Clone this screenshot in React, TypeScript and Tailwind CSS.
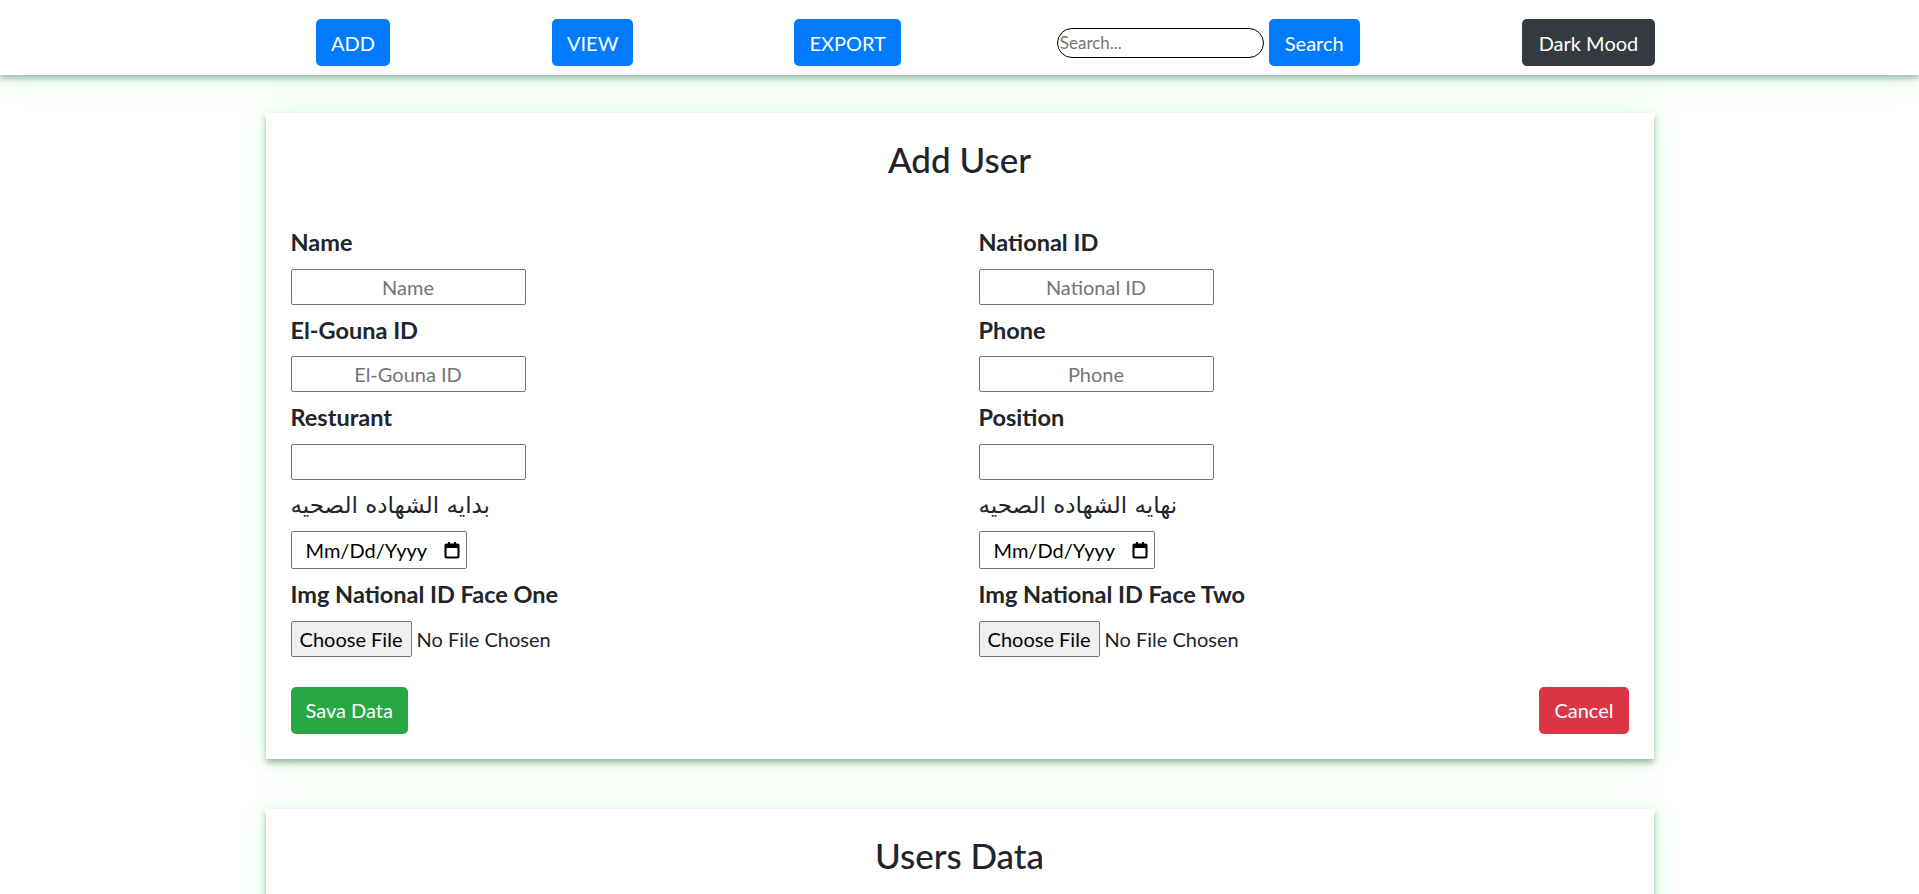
import React from "react";

const fieldLabel = "block text-[23.5px] font-bold leading-[31.5px] mb-[10px] text-[#212529]";
const textBox =
  "block h-[36px] w-[235px] rounded-[2px] border border-[#767676] bg-white text-center text-[20px] text-black placeholder:text-[#757575] outline-none";
const btn = "rounded-[5px] px-[15px] py-[8.5px] text-[20px] leading-[30px] text-white";

const CalendarIcon = () => (
  <svg width="16" height="18" viewBox="0 0 16 18" fill="none">
    <rect x="1.5" y="3.5" width="13" height="13" rx="1" stroke="#000" strokeWidth="2" />
    <rect x="1" y="3" width="14" height="4" fill="#000" />
    <rect x="4" y="1" width="2" height="3" fill="#000" />
    <rect x="10" y="1" width="2" height="3" fill="#000" />
  </svg>
);

const DateBox = () => (
  <div className="flex h-[38px] w-[176px] items-center justify-between rounded-[2px] border border-[#767676] pl-[14px] pr-[6px] text-[20px] text-black">
    <span>Mm/Dd/Yyyy</span>
    <CalendarIcon />
  </div>
);

const FileBox = () => (
  <div className="flex items-center text-[20px]">
    <span className="flex h-[36px] w-[121px] items-center justify-center rounded-[2px] border border-[#767676] bg-[#efefef] text-black">
      Choose File
    </span>
    <span className="ml-[5px] text-[#212529]">No File Chosen</span>
  </div>
);

type FieldProps = { label: string; children: React.ReactNode; arabic?: boolean };

const Field = ({ label, children, arabic }: FieldProps) => (
  <div className="mb-[10px]">
    <label
      className={
        arabic
          ? "block text-[23px] leading-[31.5px] mb-[10px] text-[#212529] font-['DejaVu_Sans',sans-serif]"
          : fieldLabel
      }
    >
      {label}
    </label>
    {children}
  </div>
);

export default function App() {
  return (
    <div className="min-h-screen bg-white font-['Lato',sans-serif] text-[#212529]">
      {/* top bar */}
      <nav className="relative z-10 flex h-[75px] items-start bg-white pl-[316px] pt-[19px] shadow-[0_4px_5px_rgba(80,125,90,0.45),0_6px_30px_rgba(150,255,170,0.3)]">
        <button className={`${btn} bg-[#007bff]`}>ADD</button>
        <button className={`${btn} ml-[162px] bg-[#007bff]`}>VIEW</button>
        <button className={`${btn} ml-[161px] bg-[#007bff]`}>EXPORT</button>
        <div className="ml-[156px] flex items-center gap-[5px]">
          <input
            placeholder="Search..."
            className="h-[30px] w-[207px] rounded-full border border-black px-[2px] text-[17px] placeholder:text-[#757575] outline-none"
          />
          <button className="rounded-[5px] px-[16px] py-[8.5px] text-[20px] leading-[30px] text-white bg-[#007bff]">
            Search
          </button>
        </div>
        <button className="ml-[162px] rounded-[5px] px-[17px] py-[8.5px] text-[20px] leading-[30px] text-white bg-[#343a40]">
          Dark Mood
        </button>
      </nav>

      {/* add user card */}
      <section className="mx-auto mt-[38px] w-[1388px] bg-white p-[25px] shadow-[0_4px_6px_rgba(80,125,90,0.5),0_0_25px_rgba(140,255,160,0.35)]">
        <h3 className="mb-[47px] text-center text-[35px] leading-[42px] font-medium">Add User</h3>
        <div className="grid grid-cols-2 gap-x-[38px]">
          <div>
            <Field label="Name">
              <input placeholder="Name" className={textBox} />
            </Field>
            <Field label="El-Gouna ID">
              <input placeholder="El-Gouna ID" className={textBox} />
            </Field>
            <Field label="Resturant">
              <input className={textBox} />
            </Field>
            <Field label="بدايه الشهاده الصحيه" arabic>
              <DateBox />
            </Field>
            <Field label="Img National ID Face One">
              <FileBox />
            </Field>
          </div>
          <div>
            <Field label="National ID">
              <input placeholder="National ID" className={textBox} />
            </Field>
            <Field label="Phone">
              <input placeholder="Phone" className={textBox} />
            </Field>
            <Field label="Position">
              <input className={textBox} />
            </Field>
            <Field label="نهايه الشهاده الصحيه" arabic>
              <DateBox />
            </Field>
            <Field label="Img National ID Face Two">
              <FileBox />
            </Field>
          </div>
        </div>
        <div className="mt-[20px] flex justify-between">
          <button className={`${btn} bg-[#28a745]`}>Sava Data</button>
          <button className={`${btn} bg-[#dc3545]`}>Cancel</button>
        </div>
      </section>

      {/* users table card */}
      <section className="mx-auto mt-[50px] w-[1388px] bg-white p-[25px] pb-[200px] shadow-[0_4px_6px_rgba(80,125,90,0.5),0_0_25px_rgba(140,255,160,0.35)]">
        <h3 className="text-center text-[35px] leading-[42px] font-medium">Users Data</h3>
      </section>
    </div>
  );
}
